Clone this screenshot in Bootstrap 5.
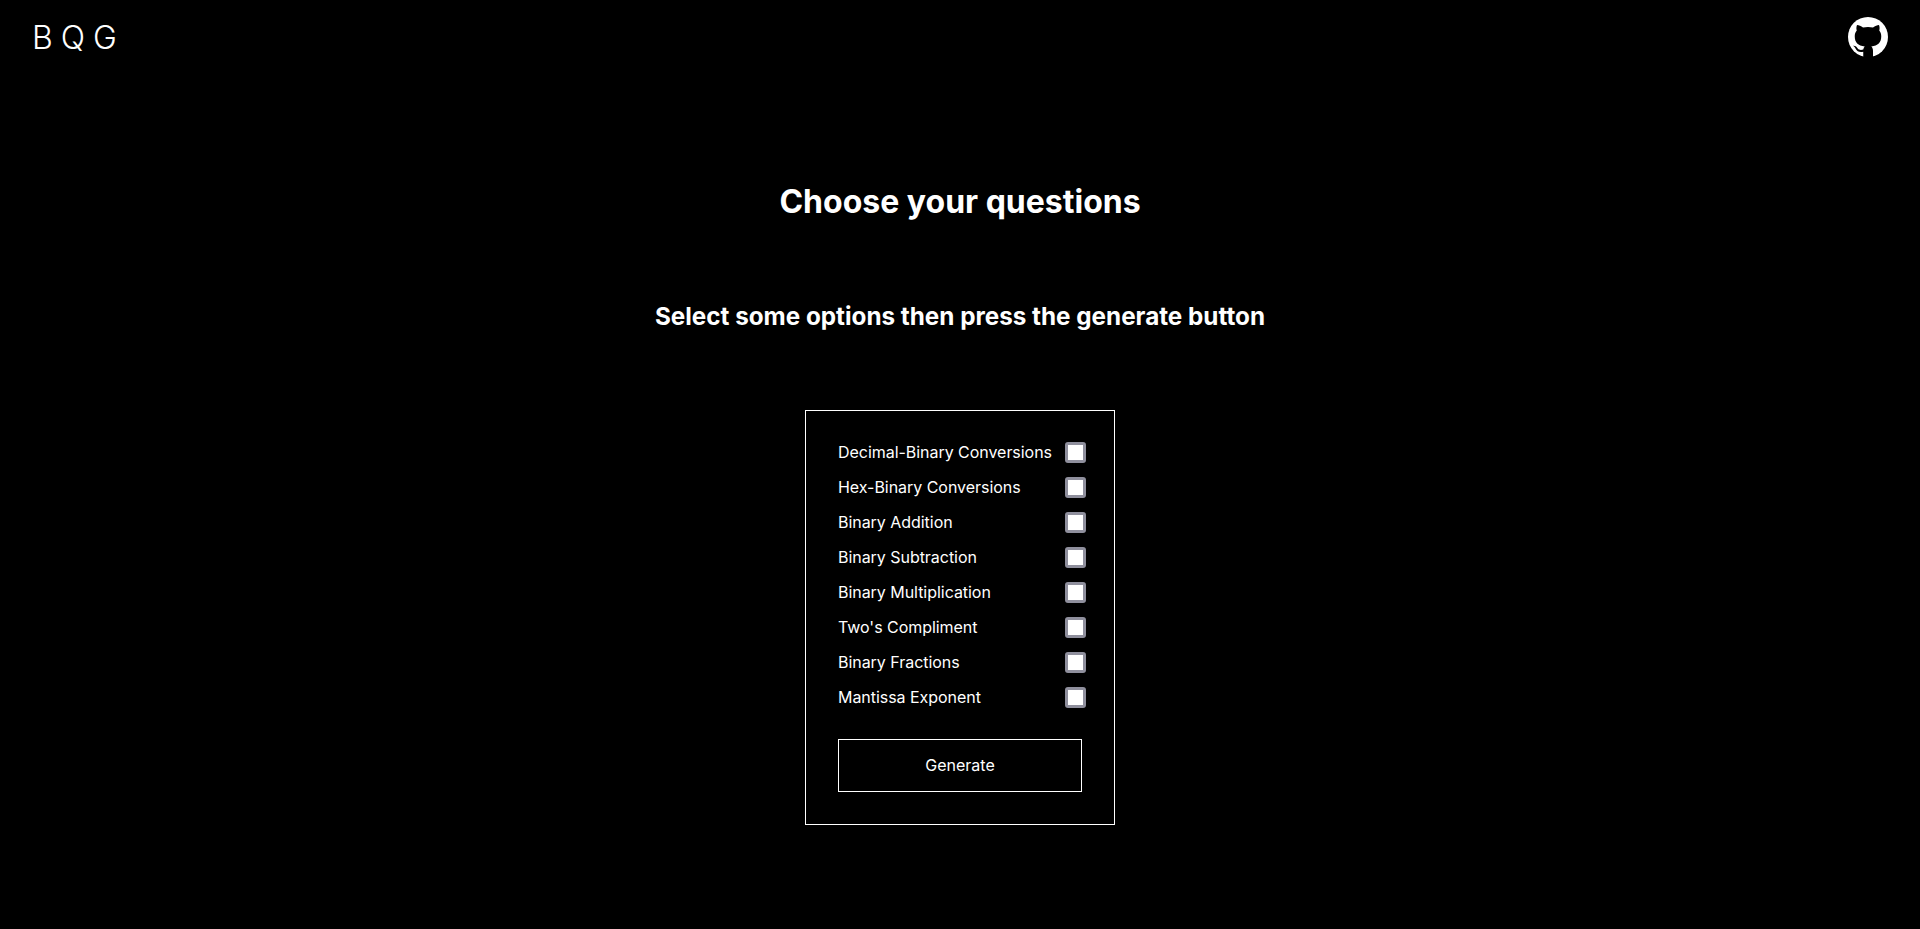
<!DOCTYPE html>
<html lang="en">
<head>
  <meta charset="UTF-8" />
  <meta name="viewport" content="width=device-width, initial-scale=1.0"/>
  <title>BQG</title>
  <link href="https://cdn.jsdelivr.net/npm/bootstrap@5.3.3/dist/css/bootstrap.min.css" rel="stylesheet">
  <style>
    body {
      background: #000;
      color: #fff;
      font-family: Inter, "Liberation Sans", sans-serif;
      height: 929px;
      overflow: hidden;
    }
    .top-bar {
      height: 74px;
      padding: 0 32px;
    }
    .brand-name {
      font-size: 32px;
      font-weight: 300;
      letter-spacing: 8px;
      color: #fff;
      text-decoration: none;
      padding-top: 2px;
    }
    .page-title {
      font-size: 32px;
      font-weight: 700;
      margin: 108px 0 0;
      line-height: 40px;
    }
    .page-sub {
      font-size: 24.25px;
      font-weight: 700;
      margin: 80px 0 0;
      line-height: 30px;
    }
    .options-box {
      width: 310px;
      height: 415px;
      margin-top: 78px;
      border: 1px solid #fff;
      padding: 24px 32px 31px;
    }
    .option-row {
      height: 35px;
      padding-bottom: 2px;
      font-size: 16px;
      letter-spacing: -0.04px;
    }
    .option-check {
      appearance: none;
      width: 21px;
      height: 21px;
      margin: 2px -4px 0 0;
      background: #fff;
      border: 3px solid #8f8f9d;
      border-radius: 3px;
    }
    .generate-btn {
      height: 53px;
      margin-top: 24px;
      padding-bottom: 8px;
      border: 1px solid #fff;
      border-radius: 0;
      color: #fff;
      background: transparent;
      font-size: 16px;
    }
  </style>
</head>
<body>

<header class="top-bar d-flex justify-content-between align-items-center">
  <a class="brand-name" href="#">BQG</a>
  <a href="#" class="d-flex" aria-label="GitHub">
    <svg width="40" height="40" viewBox="0 0 16 16">
      <circle cx="8" cy="8" r="8" fill="#fff"/>
      <path fill="#000" d="M6.1 16V13.9C4.6 14.2 3.6 13.8 3 12.6 2.7 12 2.4 11.7 2 11.5 3 11.4 3.5 12 3.9 12.6 4.4 13.2 5.2 13.3 6.1 13 6.2 12.5 6.4 12.1 6.7 11.8 4 11.5 2.7 10.2 2.7 7.7 2.7 6.8 3 6 3.5 5.4 3.3 4.8 3.3 4 3.6 3.2 4.4 3.2 5.2 3.6 6 4.2 7.3 3.9 8.7 3.9 10 4.2 10.8 3.6 11.7 3.2 12.4 3.2 12.7 4 12.7 4.8 12.5 5.4 13 6 13.3 6.8 13.3 7.7 13.3 10.2 12 11.5 9.3 11.8 9.8 12.2 10 12.8 10 13.6V16Z"/>
    </svg>
  </a>
</header>

<main class="d-flex flex-column align-items-center text-center">
  <h1 class="page-title">Choose your questions</h1>
  <h2 class="page-sub">Select some options then press the generate button</h2>
  <form class="options-box d-flex flex-column text-start">
    <label class="option-row d-flex justify-content-between align-items-center">Decimal-Binary Conversions <input class="option-check" type="checkbox"></label>
    <label class="option-row d-flex justify-content-between align-items-center">Hex-Binary Conversions <input class="option-check" type="checkbox"></label>
    <label class="option-row d-flex justify-content-between align-items-center">Binary Addition <input class="option-check" type="checkbox"></label>
    <label class="option-row d-flex justify-content-between align-items-center">Binary Subtraction <input class="option-check" type="checkbox"></label>
    <label class="option-row d-flex justify-content-between align-items-center">Binary Multiplication <input class="option-check" type="checkbox"></label>
    <label class="option-row d-flex justify-content-between align-items-center">Two's Compliment <input class="option-check" type="checkbox"></label>
    <label class="option-row d-flex justify-content-between align-items-center">Binary Fractions <input class="option-check" type="checkbox"></label>
    <label class="option-row d-flex justify-content-between align-items-center">Mantissa Exponent <input class="option-check" type="checkbox"></label>
    <button type="button" class="btn generate-btn">Generate</button>
  </form>
</main>

<script src="https://cdn.jsdelivr.net/npm/bootstrap@5.3.3/dist/js/bootstrap.bundle.min.js"></script>
</body>
</html>
